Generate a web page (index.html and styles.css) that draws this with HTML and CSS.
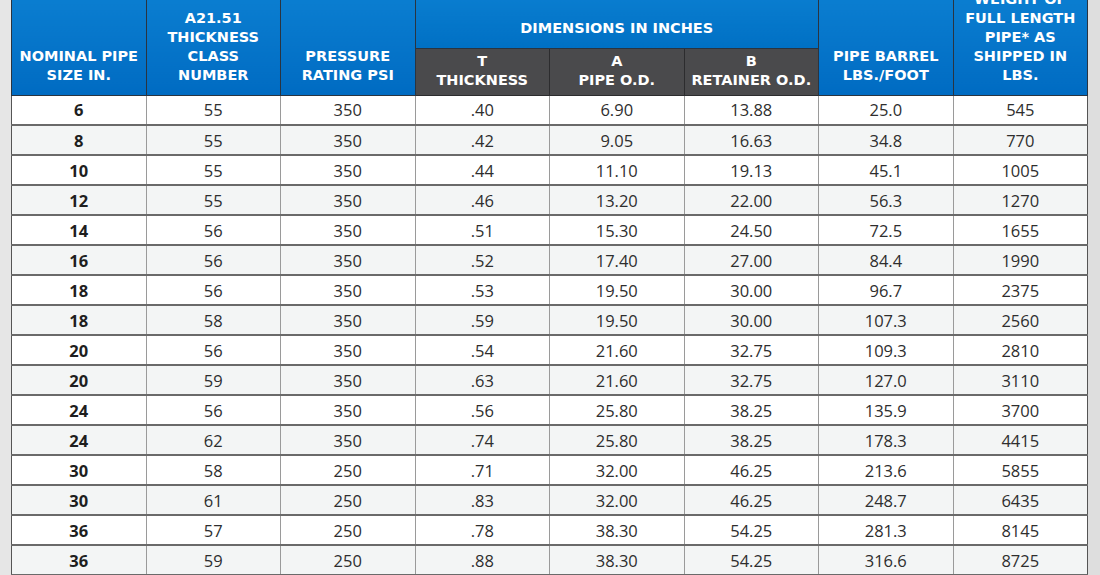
FILE: index.html
```html
<!DOCTYPE html>
<html>
<head>
<meta charset="utf-8">
<link rel="stylesheet" href="styles.css">
</head>
<body>
<div class="page">
<table class="spec">
<colgroup>
<col><col><col><col><col><col><col><col>
</colgroup>
<thead>
<tr class="h1">
<th rowspan="2">NOMINAL PIPE<br>SIZE IN.</th>
<th rowspan="2">A21.51<br>THICKNESS<br>CLASS<br>NUMBER</th>
<th rowspan="2">PRESSURE<br>RATING PSI</th>
<th colspan="3" class="dims">DIMENSIONS IN INCHES</th>
<th rowspan="2">PIPE BARREL<br>LBS./FOOT</th>
<th rowspan="2">WEIGHT OF<br>FULL LENGTH<br>PIPE* AS<br>SHIPPED IN<br>LBS.</th>
</tr>
<tr class="h2">
<th class="sub">T<br>THICKNESS</th>
<th class="sub">A<br>PIPE O.D.</th>
<th class="sub">B<br>RETAINER O.D.</th>
</tr>
</thead>
<tbody>
<tr><td>6</td><td>55</td><td>350</td><td>.40</td><td>6.90</td><td>13.88</td><td>25.0</td><td>545</td></tr>
<tr><td>8</td><td>55</td><td>350</td><td>.42</td><td>9.05</td><td>16.63</td><td>34.8</td><td>770</td></tr>
<tr><td>10</td><td>55</td><td>350</td><td>.44</td><td>11.10</td><td>19.13</td><td>45.1</td><td>1005</td></tr>
<tr><td>12</td><td>55</td><td>350</td><td>.46</td><td>13.20</td><td>22.00</td><td>56.3</td><td>1270</td></tr>
<tr><td>14</td><td>56</td><td>350</td><td>.51</td><td>15.30</td><td>24.50</td><td>72.5</td><td>1655</td></tr>
<tr><td>16</td><td>56</td><td>350</td><td>.52</td><td>17.40</td><td>27.00</td><td>84.4</td><td>1990</td></tr>
<tr><td>18</td><td>56</td><td>350</td><td>.53</td><td>19.50</td><td>30.00</td><td>96.7</td><td>2375</td></tr>
<tr><td>18</td><td>58</td><td>350</td><td>.59</td><td>19.50</td><td>30.00</td><td>107.3</td><td>2560</td></tr>
<tr><td>20</td><td>56</td><td>350</td><td>.54</td><td>21.60</td><td>32.75</td><td>109.3</td><td>2810</td></tr>
<tr><td>20</td><td>59</td><td>350</td><td>.63</td><td>21.60</td><td>32.75</td><td>127.0</td><td>3110</td></tr>
<tr><td>24</td><td>56</td><td>350</td><td>.56</td><td>25.80</td><td>38.25</td><td>135.9</td><td>3700</td></tr>
<tr><td>24</td><td>62</td><td>350</td><td>.74</td><td>25.80</td><td>38.25</td><td>178.3</td><td>4415</td></tr>
<tr><td>30</td><td>58</td><td>250</td><td>.71</td><td>32.00</td><td>46.25</td><td>213.6</td><td>5855</td></tr>
<tr><td>30</td><td>61</td><td>250</td><td>.83</td><td>32.00</td><td>46.25</td><td>248.7</td><td>6435</td></tr>
<tr><td>36</td><td>57</td><td>250</td><td>.78</td><td>38.30</td><td>54.25</td><td>281.3</td><td>8145</td></tr>
<tr><td>36</td><td>59</td><td>250</td><td>.88</td><td>38.30</td><td>54.25</td><td>316.6</td><td>8725</td></tr>
</tbody>
</table>
</div>
</body>
</html>
```
FILE: styles.css
```css
html, body {
  margin: 0;
  padding: 0;
  background: #e3e3e3;
  height: 575px;
  overflow: hidden;
}
.page {
  padding-left: 11px;
  background: linear-gradient(to right, #e6e6e6 0, #e6e6e6 11px, #dedede 11px);
}
.spec {
  width: 1076px;
  margin-top: -15px;
  border-collapse: collapse;
  table-layout: fixed;
  font-family: "Open Sans", "DejaVu Sans", sans-serif;
  background: #ffffff;
}
.spec col { width: 134.5px; }
.spec th {
  font-family: "DejaVu Sans", sans-serif;
  font-weight: bold;
  font-size: 14.5px;
  line-height: 19px;
  color: #ffffff;
  text-align: center;
  vertical-align: bottom;
  padding: 0 2px 10px;
  background: linear-gradient(to bottom, #0c80d2, #006bc2);
  border: 1px solid #2a3440;
  border-top: none;
}
.spec tr.h1 { height: 63px; }
.spec tr.h2 { height: 47px; }
.spec th.dims {
  background: linear-gradient(to bottom, #0c80d2, #0070c4);
}
.spec th.sub {
  background: #4a4a4c;
  border-color: #2c2c2e;
  padding-bottom: 5px;
}
.spec tbody tr { height: 30px; }
.spec td {
  padding: 0;
  text-align: center;
  vertical-align: middle;
  font-size: 16.5px;
  color: #2e2e2e;
  border-left: 1px solid #9a9a9a;
  border-right: 1px solid #9a9a9a;
  border-bottom: 2px solid #6a6a6a;
}
.spec tbody tr:nth-child(even) td { background: #f3f5f5; }
.spec td:first-child {
  font-weight: bold;
  color: #1e1e1e;
  border-left: 1px solid #555555;
}
.spec td:last-child { border-right: 1px solid #555555; }
```
